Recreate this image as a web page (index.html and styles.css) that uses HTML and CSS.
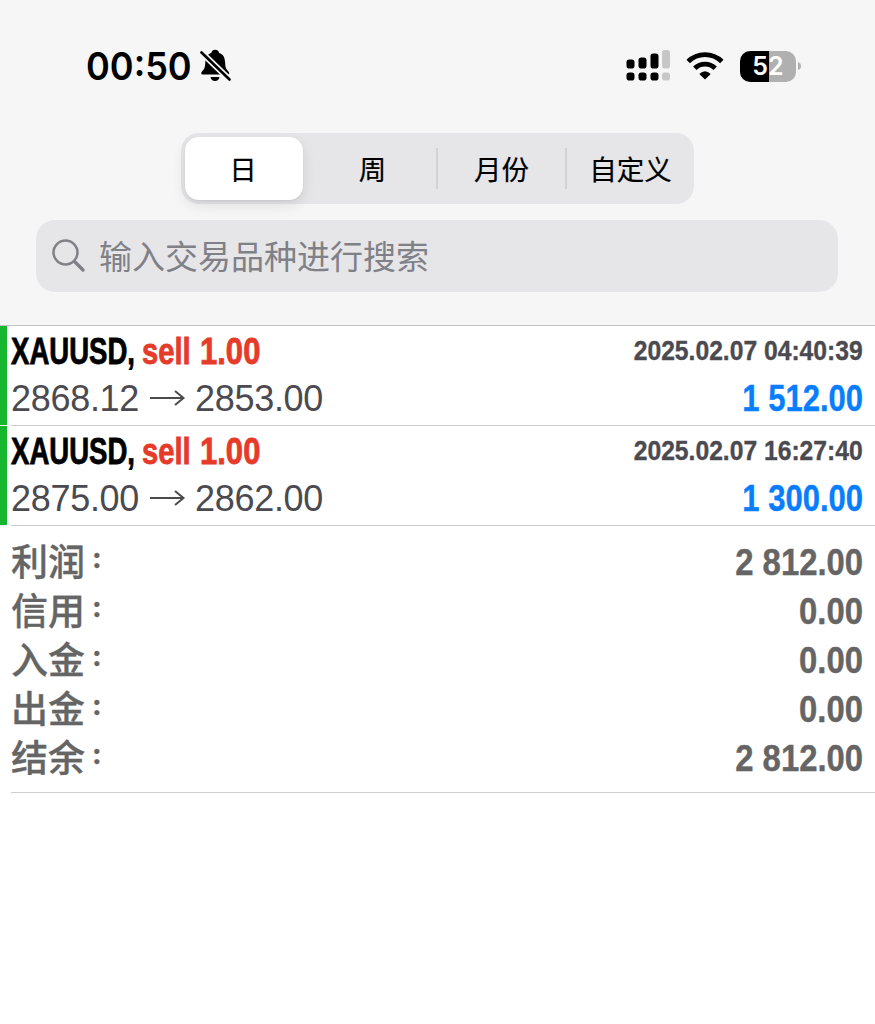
FILE: index.html
```html
<!DOCTYPE html>
<html lang="zh-CN">
<head>
<meta charset="utf-8">
<title>历史</title>
<link rel="stylesheet" href="styles.css">
</head>
<body>
<header class="top">
  <div class="status">
    <div class="status-left">
      <span class="clock">00<i>:</i>50</span>
      <svg class="bell" width="32" height="34" viewBox="0 0 32 34">
        <path d="M2.500 25.500C1 25.500.8 23.600 2 22.400C4.500 20 5 18.500 5.300 13.500C5.600 8 7.500 5.200 11.300 4.100C11.800 1.700 13.200.8 15.200.8S18.600 1.700 19.100 4.100C22.900 5.200 24.800 8 25.100 13.500C25.400 18.500 25.900 20 28.400 22.400C29.600 23.600 29.400 25.500 27.900 25.500Z" fill="#000"/>
        <path d="M10.500 28H19.500C19 30.500 17.500 32 15 32S11 30.500 10.500 28Z" fill="#000"/>
        <path d="M.5 2.500L29.500 30.500" stroke="#f6f6f7" stroke-width="6"/>
        <path d="M1.500 3.500L29.500 30.500" stroke="#000" stroke-width="2.600" stroke-linecap="round"/>
      </svg>
    </div>
    <div class="status-right">
      <svg width="44" height="32" viewBox="0 0 44 32">
        <g fill="#000"><rect x="0.500" y="9.500" width="8" height="9" rx="2.800"/><rect x="12.500" y="7.500" width="8" height="11" rx="2.800"/><rect x="24.500" y="3.500" width="8" height="15" rx="2.800"/><rect x="0.500" y="22.500" width="8" height="8" rx="2.800"/><rect x="12.500" y="22.500" width="8" height="8" rx="2.800"/><rect x="24.500" y="22.500" width="8" height="8" rx="2.800"/></g>
        <g fill="#c7c7c8"><rect x="36" y="0" width="8" height="18.500" rx="2.800"/><rect x="36" y="22.500" width="8" height="8" rx="2.800"/></g>
      </svg>
      <svg class="wifi" width="38" height="28" viewBox="0 0 38 28">
        <g fill="none" stroke="#000" stroke-width="4.900"><path d="M2.200 9.500A24 24 0 0 1 35.800 9.500"/><path d="M8.800 16.300A14.600 14.600 0 0 1 29.200 16.300"/></g>
        <path d="M19 27.500L13.300 22.100Q19 16.600 24.700 22.100Z" fill="#000"/>
      </svg>
      <div class="battery"><span>5</span><span>2</span></div>
      <svg class="cap" width="4" height="8" viewBox="0 0 4 8"><path d="M0 0Q3 1 3 4T0 8Z" fill="#b0b0b0"/></svg>
    </div>
  </div>
  <nav class="segments">
    <span class="segment selected">日</span>
    <span class="segment">周</span>
    <span class="segment divided">月份</span>
    <span class="segment divided">自定义</span>
  </nav>
  <div class="search">
    <svg width="34" height="34" viewBox="0 0 34 34" fill="none" stroke="#808087" stroke-linecap="round"><circle cx="13.500" cy="13.500" r="12" stroke-width="2.500"/><path d="M22.500 22.500L31 31" stroke-width="3.400"/></svg>
    <span>输入交易品种进行搜索</span>
  </div>
</header>
<main>
  <article class="deal">
    <div class="row">
      <div class="name"><span class="symbol">XAUUSD,</span><span class="side">sell</span><span class="volume">1.00</span></div>
      <time class="date">2025.02.07 04:40:39</time>
    </div>
    <div class="row">
      <div class="prices"><span>2868.12</span><svg width="36" height="18" viewBox="0 0 36 18" fill="none" stroke="#4b4a50" stroke-width="2"><path d="M0 9H33.500M25 2L33.500 9L25 16"/></svg><span>2853.00</span></div>
      <span class="amount profit">1 512.00</span>
    </div>
  </article>
  <article class="deal">
    <div class="row">
      <div class="name"><span class="symbol">XAUUSD,</span><span class="side">sell</span><span class="volume">1.00</span></div>
      <time class="date">2025.02.07 16:27:40</time>
    </div>
    <div class="row">
      <div class="prices"><span>2875.00</span><svg width="36" height="18" viewBox="0 0 36 18" fill="none" stroke="#4b4a50" stroke-width="2"><path d="M0 9H33.500M25 2L33.500 9L25 16"/></svg><span>2862.00</span></div>
      <span class="amount profit">1 300.00</span>
    </div>
  </article>
  <section class="totals">
    <div class="total"><span class="label">利润<i>:</i></span><span class="amount">2 812.00</span></div>
    <div class="total"><span class="label">信用<i>:</i></span><span class="amount">0.00</span></div>
    <div class="total"><span class="label">入金<i>:</i></span><span class="amount">0.00</span></div>
    <div class="total"><span class="label">出金<i>:</i></span><span class="amount">0.00</span></div>
    <div class="total"><span class="label">结余<i>:</i></span><span class="amount">2 812.00</span></div>
  </section>
</main>
</body>
</html>
```
FILE: styles.css
```css
* { box-sizing: border-box; }
body {
  margin: 0;
  background: #fff;
  color: #000;
  font-family: "Liberation Sans", "Noto Sans CJK SC", sans-serif;
  overflow: hidden;
}
.top {
  height: 326px;
  padding: 44px 36px 0;
  background: #f6f6f7;
  border-bottom: 1px solid #c2c2c4;
}
.status {
  display: flex;
  justify-content: space-between;
  height: 89px;
  padding: 0 37px 0 50px;
}
.status-left, .status-right { display: flex; align-items: center; height: 44px; }
.clock {
  display: flex;
  width: 105px;
  margin-right: 9px;
  font: 600 38px/44px Inter, sans-serif;
  white-space: nowrap;
  transform: scaleX(.95);
  transform-origin: 0 50%;
}
.clock i { font-style: normal; transform: translateY(-4px); }
.wifi { margin: 0 16px 0 16px; }
.battery {
  display: flex;
  justify-content: center;
  width: 56px;
  height: 31px;
  border-radius: 10px;
  background: linear-gradient(90deg, #000 52%, #b0b0b0 52%);
  color: #fff;
  font: 600 25px/31px Inter, sans-serif;
}
.cap { margin-left: 2px; }
.segments {
  display: grid;
  grid-template-columns: 118px 133px 129px 1fr;
  width: 513px;
  height: 71px;
  margin-left: 145px;
  padding: 4px 0 4px 4px;
  border-radius: 18px;
  background: #e6e6e9;
}
.segment {
  display: flex;
  align-items: center;
  justify-content: center;
  height: 41px;
  margin: 11px 0;
  padding: 0 0 1px 6px;
  font: 400 27.500px/40px "Noto Sans CJK SC", sans-serif;
  -webkit-text-stroke: .2px;
}
.selected {
  height: 63px;
  margin: 0;
  padding: 0 2px 1px 0;
  border-radius: 14px;
  background: #fff;
  box-shadow: 0 5px 14px rgba(0, 0, 0, .1), 0 1px 2px rgba(0, 0, 0, .05);
}
.divided { border-left: 2px solid #d2d2d6; padding-left: 0; }
.search {
  display: flex;
  align-items: center;
  gap: 13px;
  width: 802px;
  height: 72px;
  margin-top: 16px;
  padding-left: 16px;
  border-radius: 19px;
  background: #e6e6e9;
  color: #808087;
  font: 400 33px/48px "Noto Sans CJK SC", sans-serif;
}
.search span { padding-bottom: 3px; }
.deal {
  height: 100px;
  padding: 2px 12px 0 11px;
  background:
    linear-gradient(#16b62f, #16b62f) 0 0 / 7px 99px no-repeat,
    linear-gradient(#cfcfd1, #cfcfd1) 11px 100% / 100% 1px no-repeat;
}
.row { display: flex; justify-content: space-between; align-items: center; height: 47px; }
.name { display: flex; font-size: 36.500px; font-weight: 700; white-space: nowrap; -webkit-text-stroke: .8px; }
.name span { transform-origin: 0 50%; }
.symbol { width: 131px; transform: scaleX(.755); }
.side { width: 58px; color: #e63a2b; transform: scaleX(.8); }
.volume { width: 62px; color: #e63a2b; transform: scaleX(.85); }
.date {
  color: #4b4a50;
  font-size: 28.500px;
  font-weight: 700;
  white-space: nowrap;
  transform: translateY(-1px) scaleX(.865);
  transform-origin: 100% 50%;
  -webkit-text-stroke: .4px;
}
.prices { display: flex; align-items: center; color: #4b4a50; font-size: 36px; letter-spacing: -.3px; }
.prices svg { margin: 0 9px 2px 11px; }
.prices span { width: 128px; }
.amount {
  font-size: 36.500px;
  font-weight: 700;
  white-space: nowrap;
  transform: scaleX(.9);
  transform-origin: 100% 50%;
  -webkit-text-stroke: .4px;
}
.profit { color: #087eff; transform: scaleX(.85); }
.totals {
  height: 267px;
  margin-left: 11px;
  padding: 12px 12px 0 0;
  border-bottom: 1px solid #cfcfd1;
  color: #656565;
}
.total { display: flex; justify-content: space-between; align-items: center; height: 49px; }
.label {
  display: flex;
  padding-bottom: 4px;
  font: 500 37px/45px "Noto Sans CJK SC", sans-serif;
  -webkit-text-stroke: .3px;
}
.label i {
  margin-left: 7px;
  font: 700 29px/45px Inter, sans-serif;
  transform: translateY(-3px);
}
```
